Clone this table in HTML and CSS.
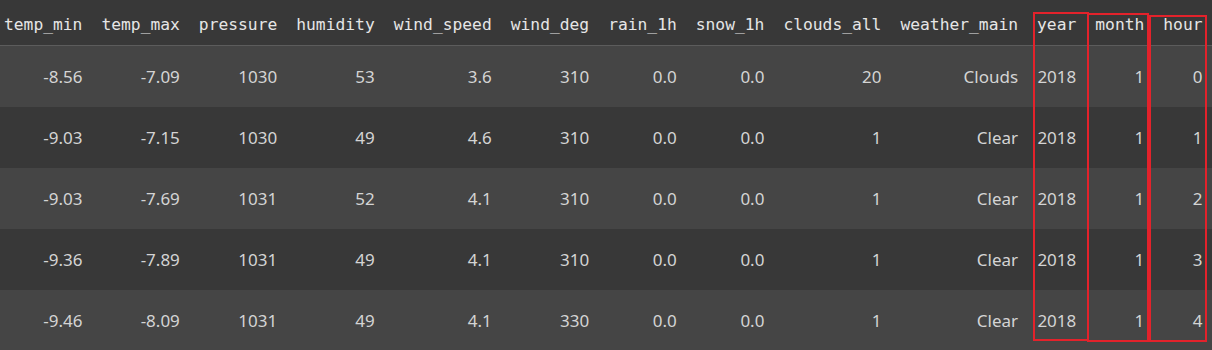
FILE: index.html
```html
<!DOCTYPE html>
<html lang="en">
<head>
<meta charset="utf-8">
<title>weather dataframe</title>
<link rel="stylesheet" href="styles.css">
</head>
<body>
<div class="frame">
  <table class="df">
    <thead>
      <tr>
        <th>temp_min</th><th>temp_max</th><th>pressure</th><th>humidity</th><th>wind_speed</th><th>wind_deg</th><th>rain_1h</th><th>snow_1h</th><th>clouds_all</th><th>weather_main</th><th>year</th><th>month</th><th>hour</th>
      </tr>
    </thead>
    <tbody>
      <tr><td>-8.56</td><td>-7.09</td><td>1030</td><td>53</td><td>3.6</td><td>310</td><td>0.0</td><td>0.0</td><td>20</td><td>Clouds</td><td>2018</td><td>1</td><td>0</td></tr>
      <tr><td>-9.03</td><td>-7.15</td><td>1030</td><td>49</td><td>4.6</td><td>310</td><td>0.0</td><td>0.0</td><td>1</td><td>Clear</td><td>2018</td><td>1</td><td>1</td></tr>
      <tr><td>-9.03</td><td>-7.69</td><td>1031</td><td>52</td><td>4.1</td><td>310</td><td>0.0</td><td>0.0</td><td>1</td><td>Clear</td><td>2018</td><td>1</td><td>2</td></tr>
      <tr><td>-9.36</td><td>-7.89</td><td>1031</td><td>49</td><td>4.1</td><td>310</td><td>0.0</td><td>0.0</td><td>1</td><td>Clear</td><td>2018</td><td>1</td><td>3</td></tr>
      <tr><td>-9.46</td><td>-8.09</td><td>1031</td><td>49</td><td>4.1</td><td>330</td><td>0.0</td><td>0.0</td><td>1</td><td>Clear</td><td>2018</td><td>1</td><td>4</td></tr>
    </tbody>
  </table>
  <div class="mark mark-year"></div>
  <div class="mark mark-month"></div>
  <div class="mark mark-hour"></div>
</div>
</body>
</html>
```

FILE: styles.css
```css
html, body {
  margin: 0;
  padding: 0;
  overflow: hidden;
  background: #383838;
}

.frame {
  position: relative;
  width: 1212px;
  height: 350px;
  overflow: hidden;
}

.df {
  margin-left: -5px;
  border-collapse: separate;
  border-spacing: 0;
  white-space: nowrap;
}

.df th,
.df td {
  padding: 0 10px 0 9px;
  text-align: right;
  vertical-align: middle;
}

.df thead tr {
  height: 46px;
}

.df th {
  font-family: "DejaVu Sans Mono", "Liberation Mono", monospace;
  font-size: 16.3px;
  font-weight: normal;
  color: #e6e6e6;
  background: #383838;
  border-bottom: 1px solid #5c5c5c;
  padding-top: 4px;
}

.df tbody tr {
  height: 61px;
}

.df td {
  font-family: "Noto Sans", "Open Sans", sans-serif;
  font-size: 17px;
  color: #d4d4d4;
}

.df tbody tr:nth-child(odd) td {
  background: #454545;
}

.df tbody tr:nth-child(even) td {
  background: #383838;
}

.mark {
  position: absolute;
  box-sizing: border-box;
  border: 2px solid #e3222b;
}

.mark-year {
  left: 1033px;
  top: 12px;
  width: 56px;
  height: 329px;
}

.mark-month {
  left: 1087px;
  top: 13px;
  width: 62px;
  height: 329px;
}

.mark-hour {
  left: 1149px;
  top: 15px;
  width: 58px;
  height: 327px;
}
```
